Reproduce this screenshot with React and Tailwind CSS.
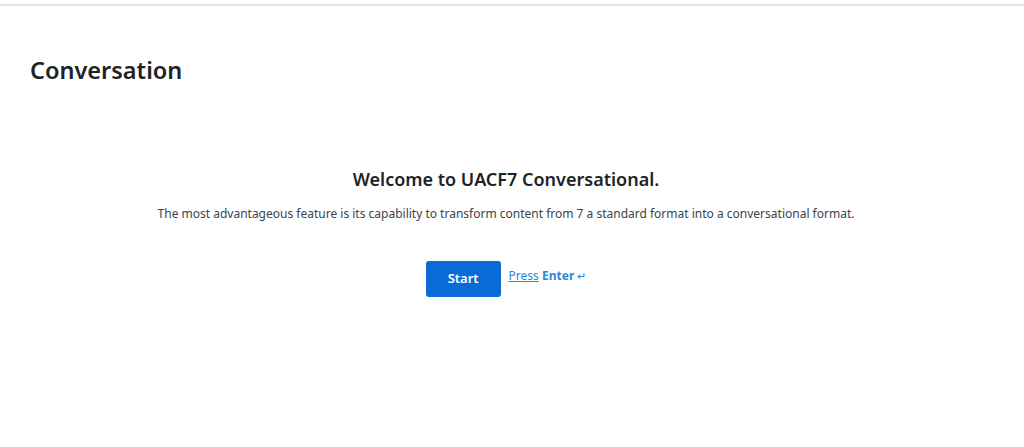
export default function App() {
  return (
    <div className="min-h-[447px] bg-white font-['Noto_Sans',sans-serif] text-[#1d2327]">
      <div className="pt-1">
        <div className="h-[2px] bg-[#e4e4e4]" />
      </div>
      <h1 className="mt-[48px] pl-[30px] text-[23.5px] font-semibold leading-[32px] text-[#1d2327]">Conversation</h1>
      <div className="mt-[80px] flex flex-col items-center pr-3">
        <h2 className="text-[18px] font-semibold leading-[26px] text-[#1d2327]">Welcome to UACF7 Conversational.</h2>
        <p className="mt-[13px] text-[12px] leading-[18px] text-[#3c434a]">
          The most advantageous feature is its capability to transform content from 7 a standard format into a conversational format.
        </p>
        <div className="mt-[38px] flex items-start gap-2">
          <button className="h-[36px] w-[75px] rounded-[3px] bg-[#0a6bd6] text-[13px] font-semibold text-white">Start</button>
          <a href="#" className="mt-[7px] text-[12px] leading-[16px] text-[#2f86d8]">
            <span className="underline">Press</span> <b className="font-bold">Enter</b> <span className="text-[11px]">↵</span>
          </a>
        </div>
      </div>
    </div>
  )
}
